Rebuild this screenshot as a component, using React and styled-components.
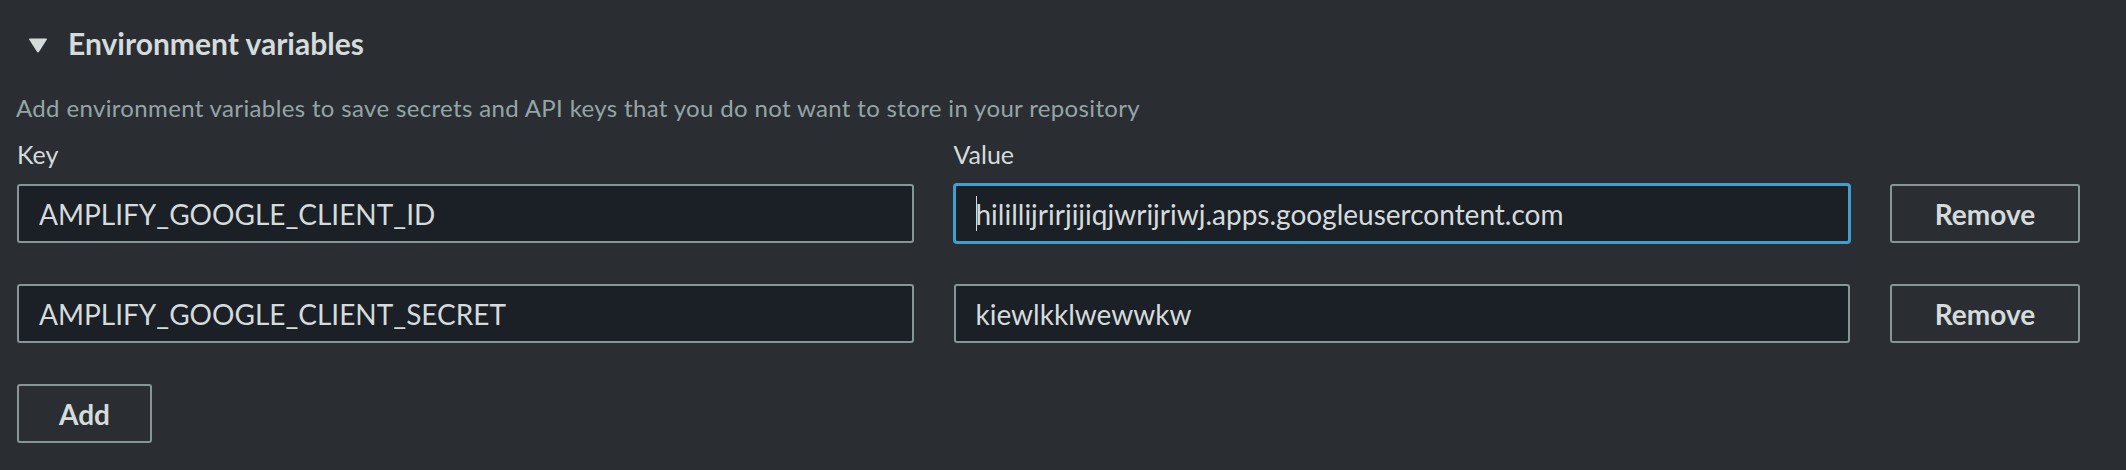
import styled, { createGlobalStyle, css } from "styled-components";

const GlobalStyle = createGlobalStyle`
  html, body {
    margin: 0;
    padding: 0;
    background: #2a2e33;
  }
  body {
    font-family: Lato, "Open Sans", sans-serif;
    color: #d5dbdb;
  }
`;

const variables = [
  { key: "AMPLIFY_GOOGLE_CLIENT_ID", value: "hilillijrirjijiqjwrijriwj.apps.googleusercontent.com", focused: true },
  { key: "AMPLIFY_GOOGLE_CLIENT_SECRET", value: "kiewlkklwewwkw" },
];

const App = () => {
  return (
    <Page>
      <GlobalStyle />
      <Header>
        <svg width="20" height="16" viewBox="0 0 20 16">
          <path d="M2 1.5 H18 Q19.5 1.5 18.7 2.8 L11.2 14.6 Q10 16.3 8.8 14.6 L1.3 2.8 Q0.5 1.5 2 1.5 Z" fill="#d5dbdb" />
        </svg>
        <Title>Environment variables</Title>
      </Header>
      <Content>
        <Description>
          Add environment variables to save secrets and API keys that you do not want to store in your repository
        </Description>
        <LabelRow>
          <FieldLabel>Key</FieldLabel>
          <FieldLabel>Value</FieldLabel>
        </LabelRow>
        <Rows>
          {variables.map((v) => (
            <VarRow key={v.key}>
              <TextField>{v.key}</TextField>
              <TextField focused={v.focused}>
                {v.focused && <Caret />}
                {v.value}
              </TextField>
              <Button>Remove</Button>
            </VarRow>
          ))}
        </Rows>
        <AddButton>Add</AddButton>
      </Content>
    </Page>
  );
};

const columns = css`
  display: grid;
  grid-template-columns: 1fr 1fr 190px;
  column-gap: 40px;
`;

const Page = styled.div`
  width: 2126px;
  height: 470px;
  background: #2a2e33;
  box-sizing: border-box;
  overflow: hidden;
`;

const Header = styled.div`
  display: flex;
  align-items: center;
  gap: 20px;
  padding: 25px 0 0 28px;
  height: 36px;
  svg {
    margin-top: 4px;
  }
`;

const Title = styled.h2`
  margin: 0;
  font-size: 30px;
  line-height: 36px;
  font-weight: 700;
  color: #d5dbdb;
`;

const Content = styled.div`
  padding: 33px 46px 0 17px;
`;

const Description = styled.p`
  margin: 0 0 0 -1px;
  font-size: 24px;
  line-height: 28px;
  letter-spacing: 0.35px;
  color: #95a5a6;
`;

const LabelRow = styled.div`
  ${columns};
  margin-top: 17px;
  margin-bottom: 15px;
`;

const FieldLabel = styled.label`
  font-size: 25px;
  line-height: 30px;
  color: #d5dbdb;
`;

const Rows = styled.div`
  display: flex;
  flex-direction: column;
  gap: 41px;
`;

const VarRow = styled.div`
  ${columns};
  height: 59px;
`;

const TextField = styled.div`
  box-sizing: border-box;
  height: 59px;
  display: flex;
  align-items: center;
  padding: 0 20px;
  background: #1b1f26;
  border: 2px solid ${({ focused }) => (focused ? "#3f9fcf" : "#879596")};
  box-shadow: ${({ focused }) => (focused ? "0 0 0 1px #3f9fcf" : "none")};
  border-radius: 3px;
  font-size: 28px;
  color: #d5dbdb;
  white-space: nowrap;
  overflow: hidden;
`;

const Caret = styled.span`
  display: inline-block;
  width: 1.5px;
  height: 35px;
  margin-right: -1.5px;
  background: #d5dbdb;
`;

const Button = styled.button`
  box-sizing: border-box;
  height: 59px;
  padding: 0 40px;
  background: transparent;
  border: 2px solid #879596;
  border-radius: 3px;
  font-family: Lato, "Open Sans", sans-serif;
  font-size: 28px;
  font-weight: 700;
  color: #d5dbdb;
  cursor: pointer;
`;

const AddButton = styled(Button)`
  margin-top: 41px;
`;

export default App;
